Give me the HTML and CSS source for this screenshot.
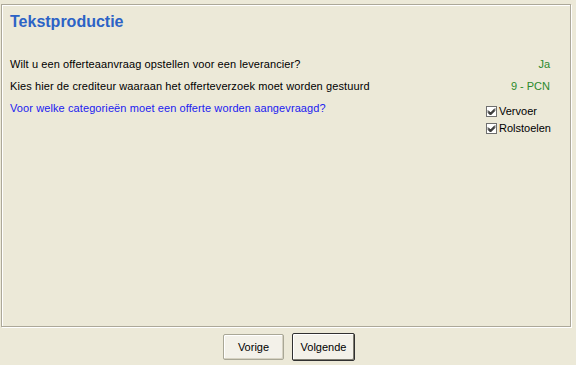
FILE: index.html
```html
<!DOCTYPE html>
<html>
<head>
<meta charset="utf-8">
<link rel="stylesheet" href="styles.css">
</head>
<body>
<div class="panel">
  <h1 class="title">Tekstproductie</h1>
  <div class="rows">
    <div class="row">
      <span class="q">Wilt u een offerteaanvraag opstellen voor een leverancier?</span>
      <span class="a">Ja</span>
    </div>
    <div class="row">
      <span class="q">Kies hier de crediteur waaraan het offerteverzoek moet worden gestuurd</span>
      <span class="a">9 - PCN</span>
    </div>
    <div class="row row-check">
      <span class="q link">Voor welke categorieën moet een offerte worden aangevraagd?</span>
      <div class="checks">
        <label class="check"><span class="box"><svg width="9" height="9" viewBox="0 0 9 9"><path d="M1 3.5 L3.5 6 L8 1.5 M1 4.5 L3.5 7 L8 2.5 M1 5.5 L3.5 8 L8 3.5" stroke="#000" stroke-width="1" fill="none"/></svg></span>Vervoer</label>
        <label class="check"><span class="box"><svg width="9" height="9" viewBox="0 0 9 9"><path d="M1 3.5 L3.5 6 L8 1.5 M1 4.5 L3.5 7 L8 2.5 M1 5.5 L3.5 8 L8 3.5" stroke="#000" stroke-width="1" fill="none"/></svg></span>Rolstoelen</label>
      </div>
    </div>
  </div>
</div>
<div class="buttons">
  <button class="btn">Vorige</button>
  <button class="btn btn-default">Volgende</button>
</div>
</body>
</html>
```
FILE: styles.css
```css
html, body {
  margin: 0;
  padding: 0;
  background: #ece9d8;
  font-family: "Liberation Sans", Arial, sans-serif;
  font-size: 11px;
  color: #000;
}
.panel {
  margin: 4px 5px 0 1px;
  height: 323px;
  border: 1px solid #aca899;
  box-shadow: 1px 1px 0 #fff, inset 1px 1px 0 #fff;
  box-sizing: border-box;
}
.title {
  margin: 0;
  padding: 7px 0 0 8px;
  font-size: 16px;
  font-weight: bold;
  color: #2c63c6;
  line-height: 20px;
}
.rows {
  padding: 26px 20px 0 8px;
}
.row {
  display: flex;
  justify-content: space-between;
  align-items: flex-start;
  height: 22px;
  line-height: 13px;
}
.q {
  letter-spacing: 0.1px;
}
.a {
  color: #2b8a2b;
}
.link {
  color: #2020f0;
}
.checks {
  display: flex;
  flex-direction: column;
  gap: 4px;
  margin-top: 3px;
  width: 64px;
}
.check {
  display: flex;
  align-items: center;
  gap: 2px;
  line-height: 13px;
}
.box {
  width: 9px;
  height: 9px;
  border: 1px solid #6f6f6f;
  background: #fff;
  display: inline-flex;
}
.buttons {
  display: flex;
  justify-content: center;
  gap: 8px;
  padding: 7px 0 0 0;
  margin-left: 2px;
}
.btn {
  font-family: "Liberation Sans", Arial, sans-serif;
  font-size: 11px;
  width: 61px;
  height: 26px;
  background: #f3f1e9;
  border: 1px solid #a9a796;
  border-radius: 2px;
  box-shadow: inset -1px -1px 0 #d6d2c2, inset 1px 1px 0 #fff;
  color: #000;
  padding: 0;
}
.btn-default {
  width: 63px;
  height: 28px;
  margin-top: -1px;
  border: 1px solid #303030;
  box-shadow: inset -1px -1px 0 #7d7b70, inset 1px 1px 0 #fff;
}
```
